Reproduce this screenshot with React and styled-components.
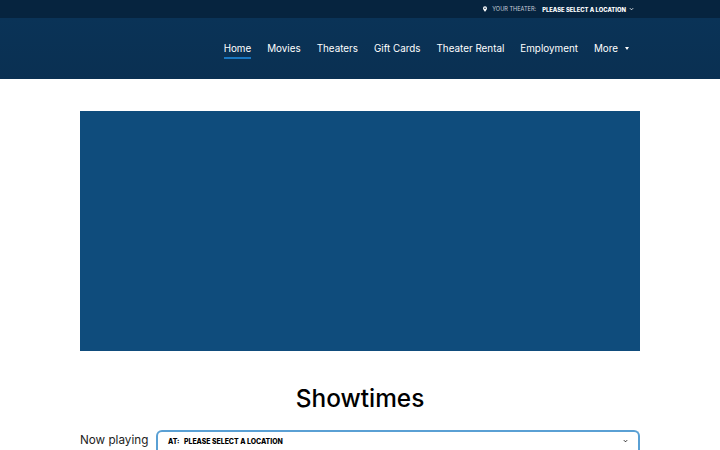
import React from "react";
import styled, { createGlobalStyle } from "styled-components";

const GlobalStyle = createGlobalStyle`
  html, body {
    margin: 0;
    padding: 0;
    background: #fff;
    overflow: hidden;
  }
  body {
    font-family: "Inter", "Liberation Sans", sans-serif;
  }
`;

const TopBar = styled.div`
  height: 18px;
  background: #06243f;
  display: flex;
  justify-content: flex-end;
  align-items: center;
  padding-right: 86px;
  color: #fff;
`;

const TheaterLabel = styled.span`
  font-size: 5.6px;
  color: #c6d0da;
  margin: 0 6px 0 5px;
`;

const TheaterValue = styled.span`
  font-size: 5.85px;
  font-weight: 800;
`;

const TopChevron = styled.span`
  margin-left: 3px;
  display: flex;
`;

const Header = styled.header`
  height: 61px;
  background: linear-gradient(#0a3357, #0a3052);
  display: flex;
  justify-content: flex-end;
  padding-right: 91px;
`;

const Nav = styled.nav`
  display: flex;
  gap: 16px;
  align-items: flex-start;
  padding-top: 23px;
`;

const NavItem = styled.a`
  font-size: 9.85px;
  line-height: 15px;
  color: #fff;
  padding-bottom: 1px;
  display: flex;
  align-items: center;
  border-bottom: 2px solid ${(p) => (p.$active ? "#1a78c2" : "transparent")};
`;

const Caret = styled.span`
  width: 0;
  height: 0;
  margin-left: 7px;
  border-left: 2.5px solid transparent;
  border-right: 2.5px solid transparent;
  border-top: 3px solid #fff;
`;

const Main = styled.main`
  padding: 32px 80px 0;
`;

const Hero = styled.div`
  height: 240px;
  background: #0f4c7c;
`;

const Title = styled.h1`
  margin: 32px 0 17px;
  font-size: 24.4px;
  line-height: 30px;
  font-weight: 550;
  text-align: center;
  color: #000;
`;

const FilterRow = styled.div`
  display: flex;
  align-items: flex-start;
  gap: 8px;
`;

const NowPlaying = styled.span`
  font-size: 11.7px;
  line-height: 21px;
  color: #222;
  width: 68px;
  white-space: nowrap;
`;

const Select = styled.div`
  flex: 1;
  height: 30px;
  box-sizing: border-box;
  border: 2px solid #5aa0d4;
  border-bottom: 0;
  border-radius: 6px 6px 0 0;
  padding: 0 10px;
  display: flex;
  align-items: flex-start;
  justify-content: space-between;
  line-height: 19px;
  font-size: 6.9px;
  font-weight: 800;
  color: #000;
`;

const SelectLabel = styled.span`
  margin-right: 3px;
`;

const SelectChevron = styled.span`
  padding-top: 7px;
  display: flex;
`;

const Chevron = () => (
  <svg width="5" height="4" viewBox="0 0 6 4" fill="none" stroke="currentColor" strokeWidth="1">
    <path d="M1 1l2 2 2-2" />
  </svg>
);

const Pin = () => (
  <svg width="4" height="6" viewBox="0 0 10 14" fill="#fff">
    <path fillRule="evenodd" d="M5 0a5 5 0 0 1 5 5c0 3.5-5 9-5 9S0 8.500 0 5a5 5 0 0 1 5-5zm0 3a2 2 0 1 0 0 4 2 2 0 0 0 0-4z" />
  </svg>
);

export default function App() {
  const links = ["Movies", "Theaters", "Gift Cards", "Theater Rental", "Employment"];
  return (
    <>
      <GlobalStyle />
      <TopBar>
        <Pin />
        <TheaterLabel>YOUR THEATER:</TheaterLabel>
        <TheaterValue>PLEASE SELECT A LOCATION</TheaterValue>
        <TopChevron><Chevron /></TopChevron>
      </TopBar>
      <Header>
        <Nav>
          <NavItem $active>Home</NavItem>
          {links.map((l) => (
            <NavItem key={l}>{l}</NavItem>
          ))}
          <NavItem>More<Caret /></NavItem>
        </Nav>
      </Header>
      <Main>
        <Hero />
        <Title>Showtimes</Title>
        <FilterRow>
          <NowPlaying>Now playing</NowPlaying>
          <Select>
            <span><SelectLabel>AT:</SelectLabel> PLEASE SELECT A LOCATION</span>
            <SelectChevron><Chevron /></SelectChevron>
          </Select>
        </FilterRow>
      </Main>
    </>
  );
}
